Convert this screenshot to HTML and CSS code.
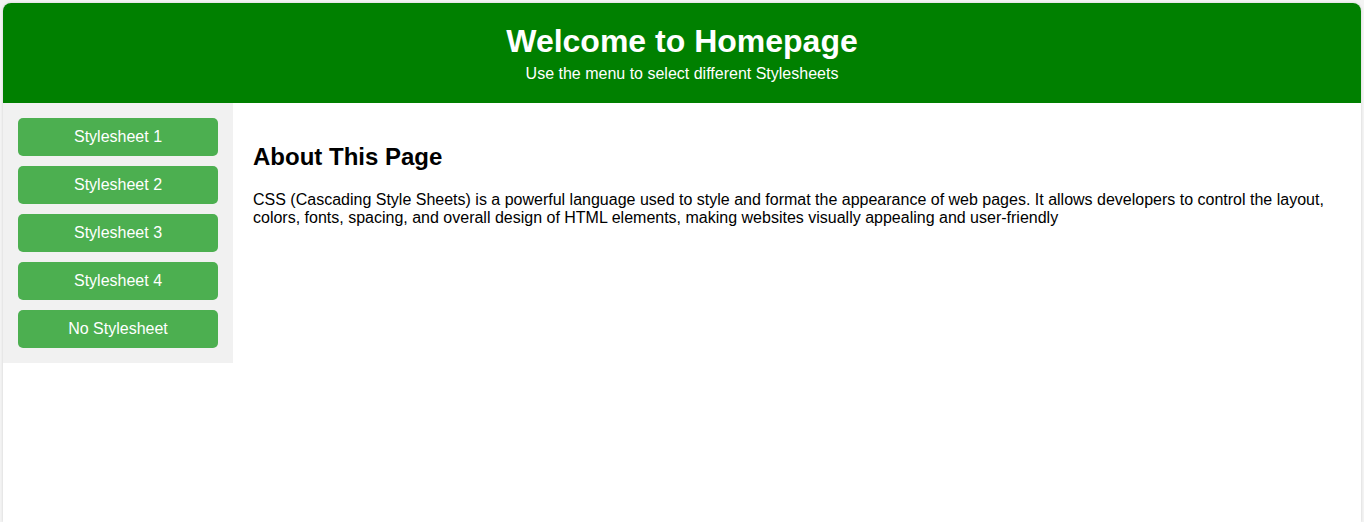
FILE: index.html
```html
<!DOCTYPE html>
<html>
<head>
<meta charset="utf-8">
<title>Homepage</title>
<link rel="stylesheet" href="styles.css">
</head>
<body>
<div class="container">
  <header class="header">
    <h1 class="title">Welcome to Homepage</h1>
    <p class="subtitle">Use the menu to select different Stylesheets</p>
  </header>
  <div class="layout">
    <nav class="sidebar">
      <button class="btn">Stylesheet 1</button>
      <button class="btn">Stylesheet 2</button>
      <button class="btn">Stylesheet 3</button>
      <button class="btn">Stylesheet 4</button>
      <button class="btn">No Stylesheet</button>
    </nav>
    <main class="content">
      <h2 class="heading">About This Page</h2>
      <p class="text">CSS (Cascading Style Sheets) is a powerful language used to style and format the appearance of web pages. It allows developers to control the layout, colors, fonts, spacing, and overall design of HTML elements, making websites visually appealing and user-friendly</p>
    </main>
  </div>
</div>
</body>
</html>
```
FILE: styles.css
```css
html, body {
  margin: 0;
  padding: 0;
}
body {
  background: #f4f4f4;
  font-family: "Liberation Sans", Arial, sans-serif;
  padding: 3px 3px 0;
}
.container {
  background: #ffffff;
  border-radius: 8px 8px 0 0;
  box-shadow: 0 0 3px rgba(0, 0, 0, 0.15);
  min-height: 519px;
  overflow: hidden;
}
.header {
  background: #008000;
  color: #ffffff;
  text-align: center;
  padding: 20px;
  height: 60px;
}
.title {
  margin: 0;
  font-size: 32px;
  font-weight: bold;
  line-height: 37px;
}
.subtitle {
  margin: 5px 0 0;
  font-size: 16px;
  line-height: 18px;
}
.layout {
  display: flex;
  align-items: flex-start;
}
.sidebar {
  width: 200px;
  flex: 0 0 200px;
  background: #f1f1f1;
  padding: 15px;
  display: flex;
  flex-direction: column;
  gap: 10px;
}
.btn {
  display: block;
  width: 200px;
  height: 38px;
  background: #4caf50;
  color: #ffffff;
  border: none;
  border-radius: 5px;
  font-family: "Liberation Sans", Arial, sans-serif;
  font-size: 16px;
  padding: 0;
  cursor: pointer;
}
.content {
  flex: 1;
  padding: 20px;
}
.heading {
  font-size: 24px;
  font-weight: bold;
  margin: 20px 0;
  color: #000;
}
.text {
  font-size: 16px;
  line-height: 18px;
  margin: 0;
  color: #000;
}
```
